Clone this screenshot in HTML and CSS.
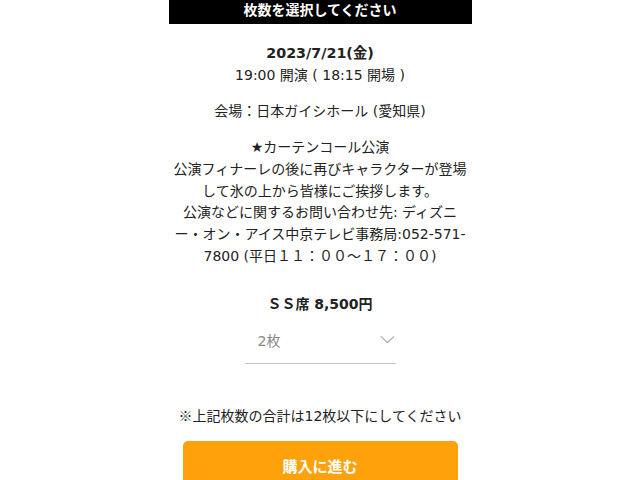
FILE: index.html
```html
<!DOCTYPE html>
<html lang="ja">
<head>
<meta charset="utf-8">
<title>枚数を選択してください</title>
<link rel="stylesheet" href="styles.css">
</head>
<body>
<div class="modal">
  <div class="header">枚数を選択してください</div>
  <div class="content">
    <div class="date">2023/7/21(金)</div>
    <div class="time">19:00 開演 ( 18:15 開場 )</div>
    <div class="venue">会場：日本ガイシホール (愛知県)</div>
    <div class="desc">★カーテンコール公演<br>公演フィナーレの後に再びキャラクターが登場<br>して氷の上から皆様にご挨拶します。<br>公演などに関するお問い合わせ先: ディズニ<br>ー・オン・アイス中京テレビ事務局:052-571-<br>7800 (平日１１：００～１７：００)</div>
    <div class="price">ＳＳ席 8,500円</div>
    <div class="select">
      <span class="select-value">2枚</span>
      <svg class="chevron" width="15" height="9" viewBox="0 0 15 9"><polyline points="1,1.5 7.5,7.5 14,1.5" fill="none" stroke="#b5b5b5" stroke-width="1.3"/></svg>
    </div>
    <div class="note"><span class="cjk">※</span>上記枚数の合計は12枚以下にしてください</div>
    <div class="button">購入に進む</div>
  </div>
</div>
</body>
</html>
```

FILE: styles.css
```css
html, body {
  margin: 0;
  padding: 0;
  background: #fff;
}
body {
  font-family: "DejaVu Sans", "Noto Sans CJK JP", sans-serif;
  font-size: 14px;
  color: #222;
}
.cjk {
  font-family: "Noto Sans CJK JP", sans-serif;
}
.modal {
  width: 303px;
  margin: 0 auto;
}
.header {
  background: #000;
  color: #fff;
  font-weight: bold;
  line-height: 20px;
  height: 24px;
  text-align: center;
}
.content {
  padding: 18px 0 0;
  text-align: center;
}
.date {
  font-weight: bold;
  font-size: 14.3px;
  line-height: 22px;
}
.time {
  line-height: 22px;
}
.venue {
  margin-top: 14px;
  line-height: 22px;
}
.desc {
  margin-top: 15px;
  line-height: 21.8px;
  white-space: nowrap;
}
.price {
  margin-top: 25px;
  font-weight: bold;
  line-height: 22px;
}
.select {
  width: 137px;
  height: 46px;
  margin: 2px auto 0;
  display: flex;
  align-items: center;
  justify-content: space-between;
  padding: 0 1px 0 13px;
  border-bottom: 1.5px solid #c4c4c4;
  color: #888;
}
.chevron {
  display: block;
}
.note {
  margin-top: 40px;
  line-height: 22px;
}
.button {
  width: 275px;
  height: 50px;
  margin: 14px auto 0;
  background: #ffa10a;
  border-radius: 5px;
  color: #fff;
  font-weight: bold;
  font-size: 15px;
  display: flex;
  align-items: center;
  justify-content: center;
}
```
